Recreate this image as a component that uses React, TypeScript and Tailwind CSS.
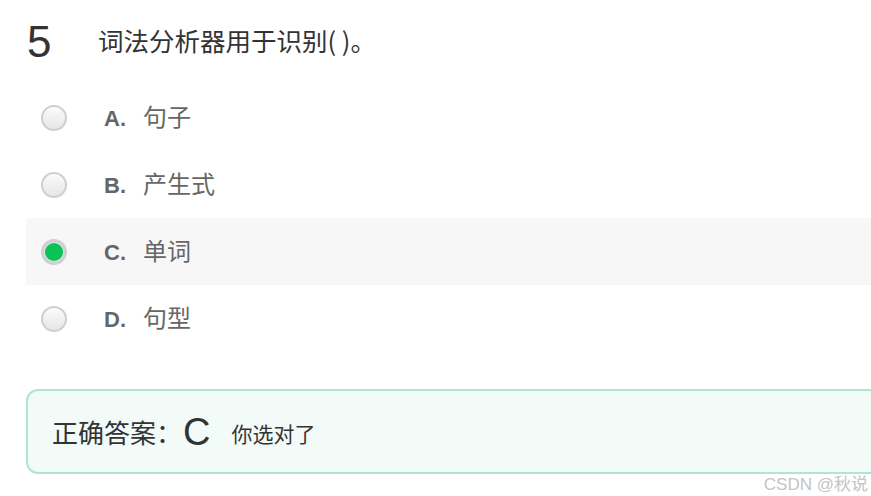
const cjk = { fontFamily: '"Noto Sans CJK SC", sans-serif' };
const latin = { fontFamily: '"Liberation Sans", Arial, "Noto Sans CJK SC", sans-serif' };

type Option = { key: string; text: string };

const options: Option[] = [
  { key: "A", text: "句子" },
  { key: "B", text: "产生式" },
  { key: "C", text: "单词" },
  { key: "D", text: "句型" },
];

const selected = "C";

function Radio({ checked }: { checked: boolean }) {
  if (checked) {
    return (
      <span className="flex h-[26px] w-[26px] items-center justify-center rounded-full border-[3px] border-[#d0d0d0] bg-[#e8e8e8] shadow-[inset_0_0_1px_rgba(0,0,0,0.2)]">
        <span className="h-[18px] w-[18px] rounded-full bg-[#0ac256]" />
      </span>
    );
  }
  return (
    <span className="block h-[26px] w-[26px] rounded-full border-2 border-[#cfcfcf] bg-gradient-to-b from-[#fbfbfb] to-[#e6e6e6]" />
  );
}

export default function App() {
  return (
    <div className="relative h-[496px] w-[871px] overflow-hidden bg-white">
      <div className="ml-[26px] w-[880px]">
        {/* question */}
        <div className="flex h-[84px] items-start pt-[18px]">
          <span className="w-[72px] pl-px text-[44px] leading-[48px] text-[#333]" style={latin}>
            5
          </span>
          <span className="mt-[4px] text-[25.5px] leading-[36px] text-[#333]" style={cjk}>
            词法分析器用于识别( )。
          </span>
        </div>

        {/* options */}
        {options.map(o => (
          <div
            key={o.key}
            className={`flex h-[67px] items-center ${o.key === selected ? "bg-[#f7f7f7]" : ""}`}
          >
            <span className="ml-[15px]">
              <Radio checked={o.key === selected} />
            </span>
            <span className="ml-[37px] -mt-[3px] flex items-baseline">
              <span className="w-[39px] text-[22px] font-bold text-[#666]" style={latin}>
                {o.key}.
              </span>
              <span className="text-[24px] text-[#666]" style={cjk}>
                {o.text}
              </span>
            </span>
          </div>
        ))}

        {/* answer */}
        <div className="mt-[37px] flex h-[85px] items-center rounded-xl border-2 border-[#ace6d1] bg-[#f3fbf8] pl-[24px]">
          <span className="text-[26px] text-[#333]" style={cjk}>
            正确答案：
          </span>
          <span className="ml-[1px] text-[38px] leading-none text-[#333]" style={latin}>
            C
          </span>
          <span className="ml-[21px] mt-[4px] text-[21px] text-[#333]" style={cjk}>
            你选对了
          </span>
        </div>
      </div>

      <span
        className="absolute right-[3px] top-[472px] text-[17px] text-[#c4c4c4]"
        style={latin}
      >
        CSDN @秋说
      </span>
    </div>
  );
}
